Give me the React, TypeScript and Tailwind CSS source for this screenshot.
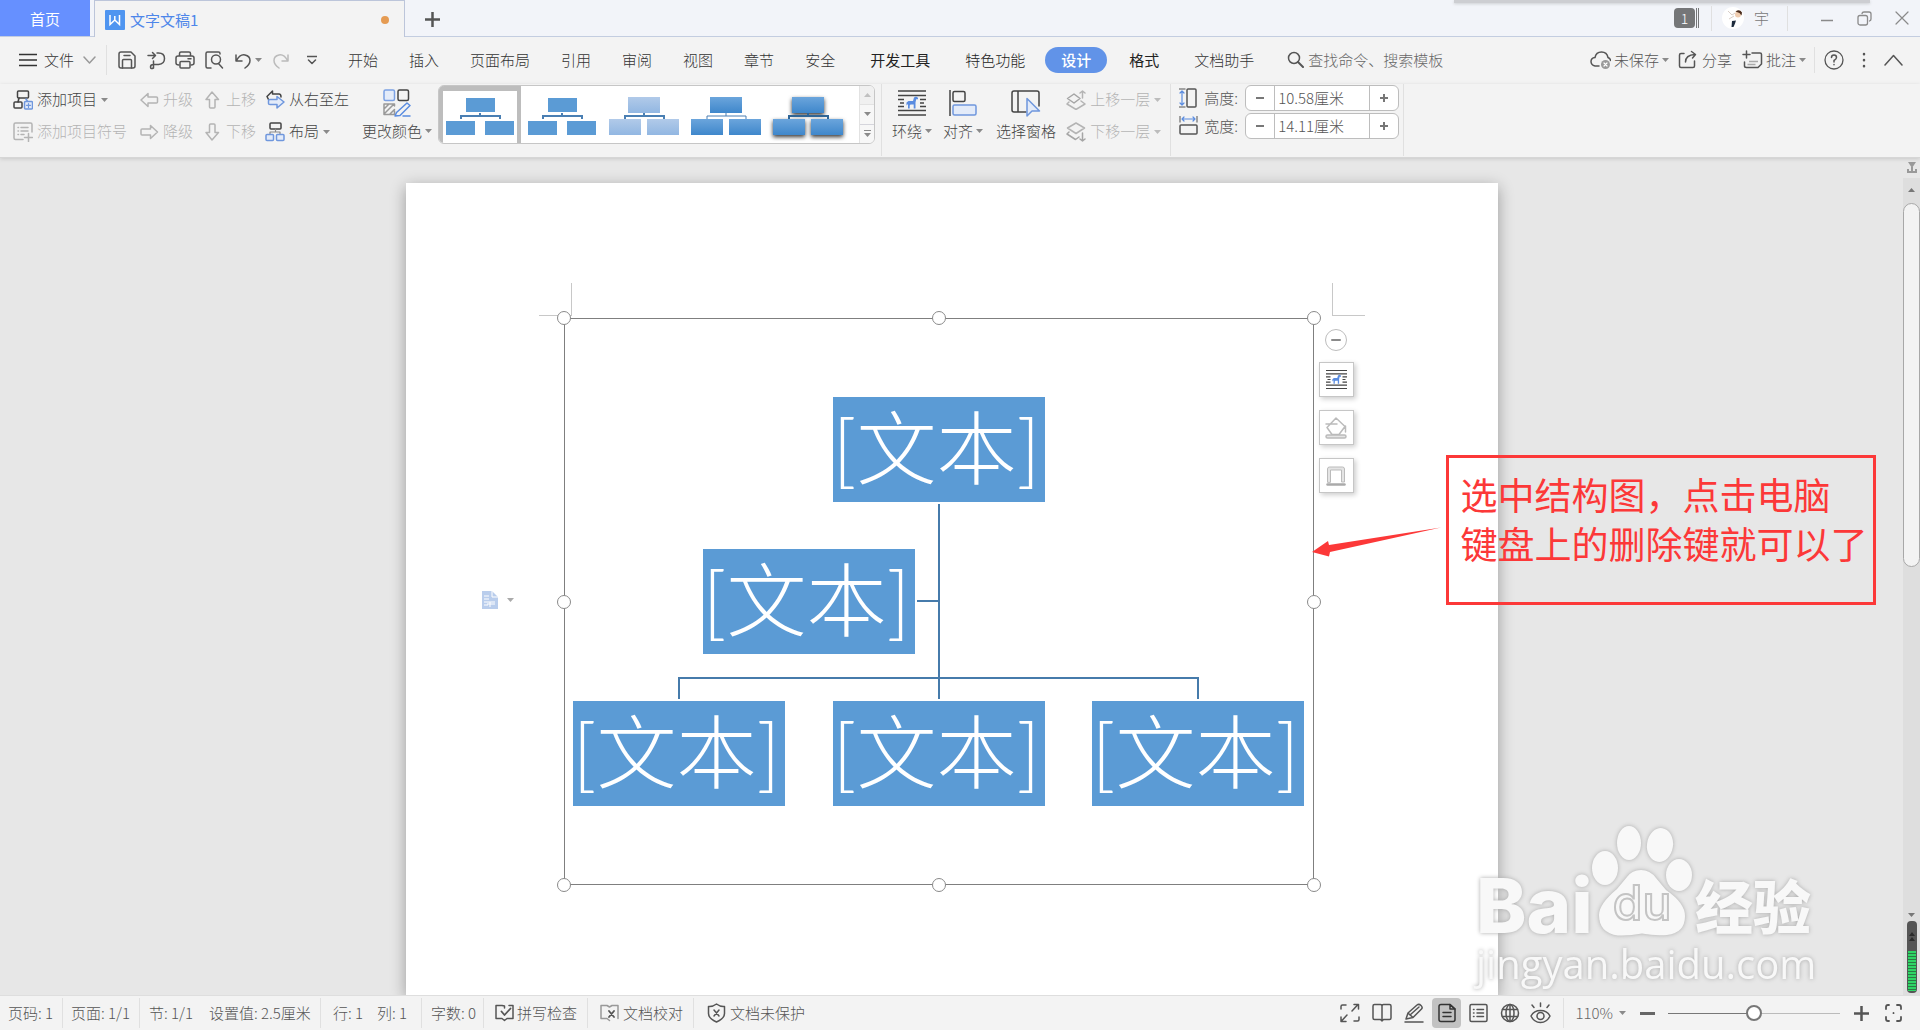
import { useState, type ReactNode } from "react";

type IconProps = {
  children: ReactNode;
  className?: string;
  width?: number;
  height?: number;
};

function Icon({ children, className, width = 20, height = 20 }: IconProps) {
  return (
    <svg
      width={width}
      height={height}
      viewBox={`0 0 ${width} ${height}`}
      fill="none"
      stroke="currentColor"
      strokeWidth="1.5"
      strokeLinecap="round"
      strokeLinejoin="round"
      className={`shrink-0 ${className ?? ""}`}
      aria-hidden="true"
    >
      {children}
    </svg>
  );
}

function Caret({ className = "text-[#8a8a8a]" }: { className?: string }) {
  return (
    <svg
      width="7"
      height="4"
      viewBox="0 0 7 4"
      className={`shrink-0 ${className}`}
      aria-hidden="true"
    >
      <path d="M0 0h7L3.5 4z" fill="currentColor" />
    </svg>
  );
}

function Divider({ className }: { className?: string }) {
  return <span className={`w-px shrink-0 bg-[#e0e0e0] ${className ?? ""}`} />;
}

function WrapIcon({ size }: { size: number }) {
  return (
    <svg
      width={size}
      height={size}
      viewBox="0 0 28 28"
      className="shrink-0 text-[#444]"
      aria-hidden="true"
    >
      <g stroke="currentColor" strokeWidth="1.6">
        <path d="M0 2h28M0 6.500h28M0 21.500h28M0 26h28" />
        <path d="M0 10.500h6M22 10.500h6M2 14h4M22 14h4M0 17.500h6M22 17.500h6" />
      </g>
      <path
        d="M10 19.500v-4.500l-1.500 1.500v-3l2-1.500h4.500l1-3.500 2-1 2 1.200v1.500h-1.800l-.7 3.300v6h-1.800V15.500h-3.200l-.8 1v3z"
        fill="#5a8ce0"
      />
    </svg>
  );
}

function TitleBar() {
  return (
    <header className="relative flex h-[37px] shrink-0 border-b border-[#c3cde0] bg-[#f2f4f9]">
      <button type="button" className="h-9 w-[90px] bg-[#6690ff] pt-0.5 font-normal text-white">
        首页
      </button>
      <div className="z-10 ml-1 flex h-[37px] w-[311px] items-center border-x border-t border-[#bcc5da] bg-[#f3f3f3] pt-0.5 pr-[15px] pl-[10px]">
        <svg width="20" height="20" viewBox="0 0 20 20" aria-hidden="true">
          <rect width="20" height="20" rx="1" fill="#4f95f0" />
          <path
            d="M5 5v9.500l4.800-4.500 4.700 4.500V5M9.800 6v4"
            fill="none"
            stroke="white"
            strokeWidth="1.500"
          />
        </svg>
        <span className="ml-[5px] font-normal text-[#4d86ea]">文字文稿1</span>
        <span className="ml-auto size-2 rounded-full bg-[#e59b52]" />
      </div>
      <button type="button" aria-label="新建" className="ml-5 text-[#555]">
        <Icon width={15} height={37}>
          <path d="M0 19.500h15M7.500 12v15" strokeWidth="2.500" strokeLinecap="butt" />
        </Icon>
      </button>
      <div className="absolute top-0 right-[50px] h-[3px] w-[416px] bg-[#cdced2] shadow-[0_1px_3px_#cdced2]" />
      <div className="ml-auto flex items-center pr-[11px] text-[#8a8a8a]">
        <span className="flex gap-px">
          <span className="flex h-5 w-[21px] items-center justify-center rounded-sm bg-[#757678] text-sm text-white">
            1
          </span>
          <span className="w-px bg-[#757678]" />
          <span className="w-px bg-[#757678]" />
        </span>
        <Divider className="ml-3 h-[25px] bg-[#cfd2d8]" />
        <svg width="22" height="22" viewBox="0 0 22 22" className="ml-2.5" aria-hidden="true">
          <circle cx="11" cy="11" r="11" fill="white" />
          <path d="M6 4l4 4 3-2M7 12l5-3" stroke="#d9cfc8" strokeWidth="1" fill="none" />
          <circle cx="16" cy="7.500" r="3" fill="#f0cdb0" />
          <path d="M13.500 4.500q4-3 6.500 1l-.500 3-2-2.500z" fill="#4a2c1c" />
          <path d="M10 14l4-.5-1 3-1.500 3.500h-2z" fill="#1d2b3c" />
        </svg>
        <span className="ml-2.5 text-[#777]">宇</span>
        <Divider className="ml-[18px] h-[25px] bg-[#cfd2d8]" />
        <button type="button" aria-label="最小化" className="ml-8">
          <Icon width={14} height={14}>
            <path d="M1 9.500h12" strokeLinecap="butt" />
          </Icon>
        </button>
        <button type="button" aria-label="还原" className="ml-[23px]">
          <Icon width={15} height={15}>
            <rect x="1" y="4.500" width="9.500" height="9.500" rx="2" strokeWidth="1.300" />
            <path d="M5 2.500q.3-1.500 2-1.500h5q2 0 2 2v5q0 1.500-1.500 2" strokeWidth="1.300" />
          </Icon>
        </button>
        <button type="button" aria-label="关闭" className="ml-[23px]">
          <Icon width={14} height={14}>
            <path d="M1 1l12 12M13 1L1 13" strokeWidth="1.200" />
          </Icon>
        </button>
      </div>
    </header>
  );
}

function QuickAccess() {
  return (
    <div className="flex items-center text-[#555]">
      <button type="button" className="flex items-center text-[#333]">
        <Icon width={18} height={14}>
          <path d="M0 1.500h18M0 7h18M0 12.500h18" strokeLinecap="butt" />
        </Icon>
        <span className="ml-[7px]">文件</span>
        <Icon width={13} height={8} className="ml-[9px] text-[#999]">
          <path d="M1 1l5.500 6L12 1" />
        </Icon>
      </button>
      <Divider className="ml-2.5 h-[30px] bg-[#c8c8c8]" />
      <div className="ml-2.5 flex gap-[9px]">
        <button type="button" aria-label="保存">
          <Icon>
            <path d="M4 2h10l4 4v10q0 2-2 2H4q-2 0-2-2V4q0-2 2-2z" />
            <path d="M5.500 18v-7.500q0-1 1-1h7q1 0 1 1V18M7 5.500h6" />
          </Icon>
        </button>
        <button type="button" aria-label="输出为PDF">
          <Icon>
            <path d="M7.500 11V18q-3 1.500-3-1t3-2.500h5q6-.500 6-6t-6-5.500H11" />
            <path d="M2 5.500h7M6.500 2.500l3 3-3 3" />
          </Icon>
        </button>
        <button type="button" aria-label="打印">
          <Icon>
            <path d="M4.500 6V3.500q0-1.500 1.500-1.500h8q1.500 0 1.500 1.500V6M4 15q-3 0-3-2V8q0-2 2-2h14q2 0 2 2v5q0 2-3 2" />
            <rect x="5" y="11.500" width="10" height="6.500" rx="1" />
            <path d="M13 8.700h3" />
          </Icon>
        </button>
        <button type="button" aria-label="打印预览">
          <Icon>
            <path d="M7 18H3.500Q2 18 2 16.500v-13Q2 2 3.500 2h11q1.500 0 1.500 1.500V4" />
            <circle cx="12" cy="9.500" r="4.500" />
            <path d="M14.500 13.500l4 4.500" />
          </Icon>
        </button>
      </div>
      <button type="button" aria-label="撤销" className="ml-[11px]">
        <Icon width={16} height={18}>
          <path d="M1 4v6h6M1.500 9.500Q5 3 10 4q5 1 5 5.500 0 4-5 7.500" />
        </Icon>
      </button>
      <Caret className="ml-1 text-[#888]" />
      <button type="button" aria-label="恢复" className="ml-[11px] text-[#bbb]">
        <Icon width={16} height={18}>
          <path d="M15 4v6H9M14.500 9.500Q11 3 6 4 1 5 1 9.500q0 4 5 7.500" />
        </Icon>
      </button>
      <button type="button" aria-label="自定义快速访问工具栏" className="ml-[18px]">
        <Icon width={10} height={10}>
          <path d="M0 1.500h10M1.500 5L5 8.500 8.500 5" />
        </Icon>
      </button>
    </div>
  );
}

const mainTabs = ["开始", "插入", "页面布局", "引用", "审阅", "视图", "章节", "安全"];

function MenuRow() {
  return (
    <nav className="flex h-[47px] shrink-0 items-center bg-[#f3f3f3] pr-[17px] pb-0.5 pl-[19px] text-[#333]">
      <QuickAccess />
      <div className="ml-[31px] flex gap-[31px]">
        {mainTabs.map((tab) => (
          <button type="button" key={tab}>
            {tab}
          </button>
        ))}
      </div>
      <div className="ml-[35px] flex items-center gap-[35px] text-[#222]">
        <button type="button" className="font-normal">
          开发工具
        </button>
        <button type="button">特色功能</button>
      </div>
      <button
        type="button"
        className="ml-5 h-[26px] rounded-full bg-[#6193e8] px-4 font-medium leading-[26px] text-white"
      >
        设计
      </button>
      <div className="ml-[22px] flex items-center gap-[35px]">
        <button type="button" className="font-normal text-[#222]">
          格式
        </button>
        <button type="button">文档助手</button>
      </div>
      <label className="ml-[33px] flex items-center gap-1 text-[#555]">
        <Icon width={17} height={17}>
          <circle cx="7" cy="7" r="5.500" />
          <path d="M11 11l5 5" strokeWidth="2" />
        </Icon>
        <input
          type="text"
          placeholder="查找命令、搜索模板"
          className="w-[140px] bg-transparent outline-none placeholder:text-[#666] placeholder:opacity-100"
        />
      </label>
      <div className="ml-auto flex items-center text-[#555]">
        <button type="button" className="flex items-center gap-[3px]">
          <Icon width={21} height={20}>
            <path d="M9 16H5Q1 15 1 11.500T5 7.500Q6 2 11.500 2T18 7.500q2.500 1 2.500 3" />
            <circle cx="15.500" cy="14.500" r="4.500" fill="#999" stroke="none" />
            <path d="M14 13l3 3M17 13l-3 3" stroke="white" strokeWidth="1.200" />
          </Icon>
          未保存
          <Caret />
        </button>
        <button type="button" className="ml-[9px] flex items-center gap-[5px]">
          <Icon width={19} height={20}>
            <path d="M6 3.500H3q-1.500 0-1.500 1.500v11q0 1.500 1.500 1.500h12q1.500 0 1.500-1.500v-5" />
            <path d="M7.500 12q0-7 9.500-7.500M13.500 1.500l4 3-3 3.500" />
          </Icon>
          分享
        </button>
        <button type="button" className="ml-2.5 flex items-center gap-[3px]">
          <Icon width={21} height={20}>
            <path d="M10 3h8q1.500 0 1.500 1.500V14l-3.500 3.500H4.500Q2.500 17.500 2.500 16v-4M4.500 1v7M1 4.500h7" />
            <path d="M7 11.500h9M5.500 14.500h8" stroke="#aaa" strokeLinecap="butt" />
          </Icon>
          批注
          <Caret />
        </button>
        <Divider className="ml-2 h-[26px]" />
        <button type="button" aria-label="帮助" className="ml-[9px]">
          <Icon>
            <circle cx="10" cy="10" r="9" strokeWidth="1.300" />
            <path d="M7.500 7.500q0-2.500 2.500-2.500t2.500 2.500Q12.500 9 10 10.500V12M10 14.500v.2" />
          </Icon>
        </button>
        <button type="button" aria-label="更多" className="ml-[18px]">
          <Icon width={4} height={18}>
            <path d="M2 3v.2M2 9v.2M2 15v.2" strokeWidth="2.500" />
          </Icon>
        </button>
        <button type="button" aria-label="折叠功能区" className="ml-[18px]">
          <Icon width={19} height={12}>
            <path d="M1 11l8.500-9.500L18 11" />
          </Icon>
        </button>
      </div>
    </nav>
  );
}

type ToolProps = {
  icon: ReactNode;
  label: string;
  caret?: boolean;
  muted?: boolean;
};

function Tool({ icon, label, caret, muted }: ToolProps) {
  return (
    <button
      type="button"
      className={`flex h-8 items-center gap-1 whitespace-nowrap ${muted ? "text-[#b4b4b4]" : "text-[#444]"}`}
    >
      {icon}
      <span className="pb-0.5">{label}</span>
      {caret ? <Caret className={muted ? "text-[#bcbcbc]" : undefined} /> : null}
    </button>
  );
}

function BigTool({ icon, label, caret }: ToolProps) {
  return (
    <button
      type="button"
      className="mt-1 flex flex-col items-center whitespace-nowrap text-[#444]"
    >
      <span className="flex h-[30px] items-center">{icon}</span>
      <span className="flex h-[26px] items-center gap-[3px]">
        {label}
        {caret ? <Caret /> : null}
      </span>
    </button>
  );
}

type ThumbProps = {
  fill: string;
  line: string;
  large?: boolean;
  thin?: boolean;
  shadow?: boolean;
};

function ChartThumb({ fill, line, large, thin, shadow }: ThumbProps) {
  const w = large ? 32 : 29;
  const h = large ? 16 : 14;
  return (
    <svg width="82" height="57" viewBox="0 0 82 57" className="block" aria-hidden="true">
      <g fill={fill} className={shadow ? "drop-shadow-[0_2px_2px_#000c]" : undefined}>
        <rect x={large ? 25 : 27} y={large ? 11 : 12} width={w} height={h} />
        <rect x={large ? 6 : 7} y={large ? 33 : 35} width={w} height={h} />
        <rect x={large ? 44 : 46} y={large ? 33 : 35} width={w} height={h} />
      </g>
      <path
        d="M41 27v3M22 33v-3h39v3"
        fill="none"
        stroke={line}
        strokeWidth={thin ? 1 : 2}
      />
    </svg>
  );
}

const thumbs: ThumbProps[] = [
  { fill: "#5b9bd5", line: "#4a7fb3" },
  { fill: "#5b9bd5", line: "#4a7fb3" },
  { fill: "url(#pale)", line: "#4a7fb3", large: true },
  { fill: "url(#deep)", line: "#4a7fb3", large: true, thin: true },
  { fill: "url(#deep)", line: "#2f6596", large: true, shadow: true },
];

function StyleGallery() {
  const [selected, setSelected] = useState(0);

  return (
    <div className="mt-px ml-1.5 flex h-[59px] overflow-hidden rounded-md border border-[#c6c6c6] bg-white">
      <svg width="0" height="0" className="absolute" aria-hidden="true">
        <linearGradient id="pale" x2="0" y2="1">
          <stop stopColor="#b1cae9" />
          <stop offset="1" stopColor="#92b7e2" />
        </linearGradient>
        <linearGradient id="deep" x2="0" y2="1">
          <stop stopColor="#6ba5dc" />
          <stop offset="1" stopColor="#3f87cb" />
        </linearGradient>
      </svg>
      {thumbs.map((thumb, index) => (
        <button
          type="button"
          key={index}
          aria-label={`样式 ${index + 1}`}
          onClick={() => setSelected(index)}
          className="relative"
        >
          <ChartThumb {...thumb} />
          {index === selected ? (
            <span className="absolute inset-0 border-x-4 border-t-[5px] border-[#bdbdbd]" />
          ) : null}
        </button>
      ))}
      <div className="ml-2.5 flex w-[15px] flex-col border-l border-[#e2e2e2] bg-[#f7f7f7]">
        <button
          type="button"
          aria-label="上一行"
          className="flex flex-1 items-center justify-center border-b border-[#e2e2e2] bg-[#f0f0f0]"
        >
          <Caret className="rotate-180 text-[#c0c0c0]" />
        </button>
        <button
          type="button"
          aria-label="下一行"
          className="flex flex-1 items-center justify-center border-b border-[#d5d5dc]"
        >
          <Caret />
        </button>
        <button
          type="button"
          aria-label="更多样式"
          className="flex flex-1 flex-col items-center justify-center gap-0.5"
        >
          <span className="h-px w-[7px] bg-[#8a8a8a]" />
          <Caret />
        </button>
      </div>
    </div>
  );
}

type SizeFieldProps = {
  id: string;
  label: string;
  initial: number;
  icon: ReactNode;
};

function SizeField({ id, label, initial, icon }: SizeFieldProps) {
  const [value, setValue] = useState(initial);

  return (
    <div className="flex items-center text-[#555]">
      {icon}
      <label htmlFor={id} className="ml-[5px] w-[39px]">
        {label}
      </label>
      <div className="ml-0.5 flex h-[26px] rounded-md border border-[#bdbdbd] bg-white">
        <button
          type="button"
          aria-label={`减小${label}`}
          onClick={() => setValue(value - 0.1)}
          className="flex w-7 items-center justify-center text-[#777]"
        >
          <span className="h-0.5 w-2 bg-current" />
        </button>
        <input
          id={id}
          type="text"
          readOnly
          value={`${value.toFixed(2)}厘米`}
          className="w-24 border-x border-[#bdbdbd] pl-[3px] outline-none"
        />
        <button
          type="button"
          aria-label={`增大${label}`}
          onClick={() => setValue(value + 0.1)}
          className="flex w-7 items-center justify-center text-[#777]"
        >
          <Icon width={8} height={8}>
            <path d="M0 4h8M4 0v8" strokeWidth="2" strokeLinecap="butt" />
          </Icon>
        </button>
      </div>
    </div>
  );
}

function Ribbon() {
  return (
    <section className="z-10 flex h-[74px] shrink-0 border-b border-[#d6d6d6] bg-[#f3f3f3] pl-[13px] shadow-[0_1px_4px_#0002]">
      <div>
        <Tool
          caret
          label="添加项目"
          icon={
            <Icon>
              <rect x="4.500" y="1" width="11" height="7" rx="1" />
              <rect x="1" y="12" width="8" height="6" rx="1" />
              <path d="M6 8l-1 4" />
              <g stroke="#6f97dd">
                <path d="M13 9l2 3" />
                <rect x="11.500" y="11.500" width="8" height="7.500" rx="1" fill="#e3ebf9" />
                <path d="M15.500 13.500v4M13.500 15.300h4" strokeWidth="1.200" />
              </g>
            </Icon>
          }
        />
        <Tool
          muted
          label="添加项目符号"
          icon={
            <Icon>
              <path d="M10 17.500H2.500Q1 17.500 1 16V2.500Q1 1 2.500 1h15Q19 1 19 2.500V10" />
              <path d="M5 5.500h.5M8 5.500h7M5 9h.5M8 9h7M5 12.500h.5M8 12.500h3M15.500 11.500v8M11.500 15.500h8" />
            </Icon>
          }
        />
      </div>
      <div className="ml-[13px]">
        <Tool
          muted
          label="升级"
          icon={
            <Icon width={19} height={16}>
              <path d="M1 8l7-6.500V5h8.500q1 0 1 1v4q0 1-1 1H8v3.500z" />
            </Icon>
          }
        />
        <Tool
          muted
          label="降级"
          icon={
            <Icon width={19} height={16}>
              <path d="M17.500 8l-7-6.500V5H2Q1 5 1 6v4q0 1 1 1h8.500v3.500z" />
            </Icon>
          }
        />
      </div>
      <div className="ml-3">
        <Tool
          muted
          label="上移"
          icon={
            <Icon width={17} height={18}>
              <path d="M7 1l6.500 7.500H10V16q0 1-1 1H5.500q-1 0-1-1V8.500H1z" />
            </Icon>
          }
        />
        <Tool
          muted
          label="下移"
          icon={
            <Icon width={17} height={18}>
              <path d="M7 17l6.500-7.500H10V2q0-1-1-1H5.500q-1 0-1 1v7.500H1z" />
            </Icon>
          }
        />
      </div>
      <div className="ml-[9px]">
        <Tool
          label="从右至左"
          icon={
            <Icon>
              <path d="M4 10.500L2 6.500 7.500 1v3H14q2 0 2 3" />
              <path
                d="M19 12l-7-5.500V9.500H5q-1.500 0-1.500 1v3q0 1 1.500 1h7V18z"
                stroke="#6f97dd"
                fill="#e3ebf9"
              />
            </Icon>
          }
        />
        <Tool
          caret
          label="布局"
          icon={
            <Icon>
              <rect x="5" y="1" width="11" height="6" rx="1" />
              <path d="M10.500 7v3M5 12v-2h10v2" strokeWidth="1.200" stroke="#888" />
              <rect x="1" y="12.500" width="7.500" height="6" rx="1" stroke="#6f97dd" fill="#e3ebf9" />
              <rect x="11.500" y="12.500" width="7.500" height="6" rx="1" stroke="#6f97dd" fill="#e3ebf9" />
            </Icon>
          }
        />
      </div>
      <div className="ml-[13px]">
        <BigTool
          caret
          label="更改颜色"
          icon={
            <Icon width={28} height={28}>
              <rect x="1" y="1" width="10.500" height="10.500" rx="1.500" stroke="#7ba1e4" fill="#e3ebf9" />
              <rect x="15" y="1" width="10.500" height="10.500" rx="1.500" />
              <path
                d="M11.500 17v-2H1v10.500h10.500V22M1 20l5-5M1 25l10-10M6.500 25.500l5-5"
                stroke="#999"
              />
              <path d="M13.500 23.500L24 14l3 2.500L17 26.500l-5 .5zM20 27h7" stroke="#5a8ce0" />
            </Icon>
          }
        />
      </div>
      <StyleGallery />
      <Divider className="ml-1.5 h-[72px]" />
      <div className="ml-2.5 flex">
        <BigTool caret label="环绕" icon={<WrapIcon size={28} />} />
        <div className="ml-[11px]">
          <BigTool
            caret
            label="对齐"
            icon={
              <Icon width={28} height={28}>
                <path d="M1 1v26" strokeLinecap="butt" />
                <rect x="4" y="2.500" width="12" height="10" rx="1.500" />
                <rect x="4" y="16" width="23" height="10" rx="1.500" stroke="#6f97dd" fill="#e3ebf9" />
              </Icon>
            }
          />
        </div>
        <div className="ml-[13px]">
          <BigTool
            label="选择窗格"
            icon={
              <Icon width={30} height={28}>
                <path d="M15 23H3q-2 0-2-2V4q0-2 2-2h23q2 0 2 2v13M7 2v21" />
                <path d="M16 9.500V27l5-5h7.500z" stroke="#6f97dd" fill="#e3ebf9" />
              </Icon>
            }
          />
        </div>
        <div className="ml-2.5">
          <Tool
            muted
            caret
            label="上移一层"
            icon={
              <Icon>
                <path d="M8 4l6 4.500L8 13 1.500 8.500z" stroke="#a5a5a5" />
                <path d="M3 12l-2 2 9 5.500 9-5.500-4-3M16.500 8V1M14 3l2.500-2L19 3" />
              </Icon>
            }
          />
          <Tool
            muted
            caret
            label="下移一层"
            icon={
              <Icon>
                <path d="M10 1l8.500 5L10 11.500 1.500 6z" />
                <path
                  d="M3 10l-2 2 8.500 5.500L13 15M16.500 11v8M14 17l2.500 2 2.500-2"
                  stroke="#a5a5a5"
                />
              </Icon>
            }
          />
        </div>
      </div>
      <Divider className="ml-[9px] h-[72px]" />
      <div className="mt-px ml-2 flex flex-col gap-0.5">
        <SizeField
          id="shape-height"
          label="高度:"
          initial={10.58}
          icon={
            <Icon>
              <rect x="8" y="1" width="9" height="18" rx="1" />
              <path d="M0 1h6M0 19h6" stroke="#888" />
              <path
                d="M3 3v14M1 5l2-2 2 2M1 15l2 2 2-2"
                stroke="#5a8ce0"
                strokeWidth="1.200"
              />
            </Icon>
          }
        />
        <SizeField
          id="shape-width"
          label="宽度:"
          initial={14.11}
          icon={
            <Icon>
              <rect x="1" y="9" width="17" height="9" rx="1" />
              <path d="M1 0v6M18 0v6" stroke="#888" />
              <path
                d="M3 3h13M5 1L3 3l2 2M14 1l2 2-2 2"
                stroke="#5a8ce0"
                strokeWidth="1.200"
              />
            </Icon>
          }
        />
      </div>
      <Divider className="ml-1 h-[72px]" />
    </section>
  );
}

const nodes = [
  "left-[269px] top-[79px]",
  "left-[139px] top-[231px]",
  "left-[9px] top-[383px]",
  "left-[269px] top-[383px]",
  "left-[528px] top-[383px]",
];

const handles = [
  "left-0 top-0",
  "left-1/2 top-0",
  "left-full top-0",
  "left-0 top-1/2",
  "left-full top-1/2",
  "left-0 top-full",
  "left-1/2 top-full",
  "left-full top-full",
];

function OrgChart() {
  return (
    <div className="absolute left-[158px] top-[135px] h-[567px] w-[750px]">
      <span className="absolute inset-0 border border-[#7f7f7f]" />
      <svg
        width="750"
        height="567"
        viewBox="0 0 750 567"
        className="absolute inset-0"
        aria-hidden="true"
      >
        <path
          d="M375 186v195M353 283h22M115 381v-21h519v21"
          fill="none"
          stroke="#467bab"
          strokeWidth="2"
        />
      </svg>
      {nodes.map((position) => (
        <div
          key={position}
          className={`absolute flex h-[105px] w-[212px] items-center justify-center whitespace-nowrap bg-[#5b9bd5] pr-1 pb-1.5 font-[Lato,'Noto_Sans_CJK_SC',sans-serif] text-[80px] leading-none text-white ${position}`}
        >
          <span>
            [<span className="font-light">文本</span>]
          </span>
        </div>
      ))}
      {handles.map((position) => (
        <span
          key={position}
          className={`absolute size-3.5 -translate-x-1/2 -translate-y-1/2 rounded-full border border-[#8a8a8a] bg-white ${position}`}
        />
      ))}
    </div>
  );
}

function FloatingTools() {
  const box =
    "flex size-[35px] items-center justify-center border border-[#c6c6c6] bg-white shadow-[2px_2px_5px_#0003]";
  return (
    <div className="absolute left-[913px] top-[146px] flex flex-col items-center gap-[13px]">
      <button
        type="button"
        aria-label="收起"
        className="-mb-0.5 flex size-[22px] items-center justify-center rounded-full border border-[#bdbdbd] bg-white"
      >
        <span className="h-0.5 w-2.5 rounded bg-[#8a8a8a]" />
      </button>
      <button type="button" aria-label="布局选项" className={box}>
        <WrapIcon size={21} />
      </button>
      <button type="button" aria-label="填充" className={`${box} text-[#bbb]`}>
        <Icon width={22} height={22}>
          <path d="M11 1l9 8.500L14 17.500H7L2 10.500zM1 7h11M20.500 9v6" />
          <rect x="1" y="18" width="20" height="3" rx="1.500" fill="#e4e4e4" />
        </Icon>
      </button>
      <button type="button" aria-label="轮廓" className={`${box} text-[#aaa]`}>
        <Icon>
          <path
            d="M1.500 16V3q0-2 2-2h13q2 0 2 2v13h-3V4h-11v12z"
            stroke="#bbb"
            fill="#e4e4e4"
            strokeWidth="1"
          />
          <path d="M1.500 18.500h17" strokeWidth="2.500" />
        </Icon>
      </button>
    </div>
  );
}

function Callout() {
  return (
    <>
      <svg
        width="130"
        height="30"
        viewBox="0 0 130 30"
        className="absolute left-[906px] top-[344px]"
        aria-hidden="true"
      >
        <path d="M0 25L16 14l1 4L129 .500 18 25l-1 4.500z" fill="#fc3838" />
      </svg>
      <div className="absolute left-[1040px] top-[272px] h-[150px] w-[430px] whitespace-nowrap border-[3px] border-[#fc3838] pt-3 pl-3 text-[37px] font-normal leading-[49px] text-[#fc3838]">
        选中结构图，点击电脑
        <br />
        键盘上的删除键就可以了
      </div>
    </>
  );
}

function Watermark() {
  return (
    <div className="absolute right-[100px] bottom-1 w-[344px] text-[#f8f8f8] drop-shadow-[0_0_2px_#aaa]">
      <div className="flex items-end whitespace-nowrap">
        <span className="w-[115px] font-[Inter,sans-serif] text-[76px] font-extrabold leading-[64px]">
          Bai
        </span>
        <div className="relative">
          <svg width="102" height="112" viewBox="0 0 102 112" fill="currentColor" aria-hidden="true">
            <ellipse cx="14" cy="43" rx="13" ry="17" />
            <ellipse cx="38" cy="18" rx="12" ry="17" />
            <ellipse cx="69" cy="20" rx="13" ry="17" transform="rotate(8 69 20)" />
            <ellipse cx="88" cy="50" rx="13" ry="16" />
            <path d="M50 45q9 0 15 8l10 12q19 13 19 26 0 17-18 19-12 1-25-1.500-13 2.500-24 2Q8 108 8 90q0-11 18-26l10-12q5-7 14-7z" />
          </svg>
          <span className="absolute inset-x-0 bottom-2.5 text-center font-[Inter,sans-serif] text-5xl font-medium leading-none text-[#f8f8f8] [-webkit-text-stroke:2px_#c4c4c4]">
            du
          </span>
        </div>
        <span className="ml-0.5 text-[58px] font-black leading-[66px]">经验</span>
      </div>
      <div className="font-['Open_Sans',sans-serif] text-[40px] font-medium leading-[54px]">
        jingyan.baidu.com
      </div>
    </div>
  );
}

function ScrollBar() {
  return (
    <div className="flex w-[17px] shrink-0 flex-col items-center">
      <svg width="12" height="12" viewBox="0 0 12 12" className="my-1 text-[#999]" aria-hidden="true">
        <path d="M2 0h8L6 6zM5 5h2v3H5zM1 7h2v2h2v-2h2v2h2V7h2v4H1z" fill="currentColor" />
      </svg>
      <div className="flex w-full flex-1 flex-col items-center bg-[#dedede] pt-2.5">
        <Caret className="rotate-180 text-[#777]" />
        <div className="mt-[11px] h-[364px] w-full rounded-full border border-[#a8a8a8] bg-[#f3f3f3]" />
        <Caret className="mt-auto text-[#777]" />
        <div className="mt-1 mb-0.5 flex h-[72px] w-2.5 flex-col items-center justify-end rounded-sm bg-[#555]">
          <svg width="6" height="9" viewBox="0 0 6 9" className="mb-2.5" aria-hidden="true">
            <path d="M3 0l3 4H0zM3 5l3 4H0z" fill="#2b2b2b" />
          </svg>
          <div className="mb-0.5 h-10 w-2 bg-[repeating-linear-gradient(#2fd566_0_2px,#2a7a45_2px_3px)]" />
        </div>
      </div>
    </div>
  );
}

function Workspace() {
  return (
    <main className="relative flex min-h-0 flex-1 overflow-hidden bg-[#e7e7e7]">
      <div className="flex flex-1 justify-center pt-[25px]">
        <div className="relative w-[1092px] bg-white shadow-[0_4px_15px_#0005]">
          <span className="absolute left-[133px] top-[100px] h-[33px] w-[33px] border-r border-b border-[#c8c8c8]" />
          <span className="absolute left-[926px] top-[100px] h-[33px] w-[33px] border-b border-l border-[#c8c8c8]" />
          <button
            type="button"
            aria-label="段落布局"
            className="absolute left-[76px] top-[408px] flex items-center gap-[9px]"
          >
            <svg width="16" height="18" viewBox="0 0 16 18" aria-hidden="true">
              <path d="M0 0h10l6 6v12H0z" fill="#b9cdec" />
              <path
                d="M10 0v6h6M2 5h5M2 8h5M2 11h11M2 14h4M5 13h8M8 11v5"
                fill="none"
                stroke="white"
                strokeWidth="1"
              />
            </svg>
            <Caret className="text-[#aaa]" />
          </button>
          <OrgChart />
          <FloatingTools />
          <Callout />
        </div>
      </div>
      <ScrollBar />
      <Watermark />
    </main>
  );
}

function StatusBar() {
  const [zoom, setZoom] = useState(50);

  return (
    <footer className="flex h-[35px] shrink-0 items-center whitespace-nowrap border-t border-[#dedede] bg-[#f3f3f3] pr-[18px] pl-2 text-[#555]">
      <span className="w-[46px]">页码: 1</span>
      <Divider className="ml-2 h-[30px]" />
      <span className="ml-2 w-[60px]">页面: 1/1</span>
      <Divider className="ml-2 h-[30px]" />
      <span className="ml-[9px] w-[46px]">节: 1/1</span>
      <span className="ml-3.5 w-[106px]">设置值: 2.5厘米</span>
      <Divider className="ml-[5px] h-[30px]" />
      <span className="ml-3 w-[30px]">行: 1</span>
      <span className="ml-3.5 w-[30px]">列: 1</span>
      <Divider className="ml-3.5 h-[30px]" />
      <span className="ml-[9px] w-[46px]">字数: 0</span>
      <Divider className="ml-1.5 h-[30px]" />
      <button type="button" className="ml-[11px] flex items-center gap-[3px]">
        <Icon width={19} height={18}>
          <path d="M7 1.500H1v13h6l2.500 2 2.500-2h6v-13h-4M9.500 4v-2L7 1.500" />
          <path d="M6.500 7.500l3 3.500 6-6.500" strokeWidth="1.800" />
        </Icon>
        拼写检查
      </button>
      <Divider className="ml-2.5 h-[30px]" />
      <button type="button" className="ml-3 flex items-center gap-1">
        <Icon width={19} height={18}>
          <path d="M7 1.500H1v13h6l2.500 2M18 14.500v-13h-6L9.500 3 7 1.500" stroke="#999" />
          <path d="M9 7l5 6M14 7l-5 6" strokeWidth="1.800" />
        </Icon>
        文档校对
      </button>
      <Divider className="ml-2.5 h-[30px]" />
      <button type="button" className="ml-[13px] flex items-center gap-1">
        <Icon width={19} height={20}>
          <path d="M9.500 1q4 3 8 2.500v7q0 5-8 8.500-8-3.500-8-8.500v-7q4 .5 8-2.500z" />
          <path d="M7 7l5 6M12 7l-5 6" />
        </Icon>
        文档未保护
      </button>

      <div className="ml-auto flex items-center">
        <button type="button" aria-label="全屏显示">
          <Icon>
            <path d="M1 6V3.500Q1 2 2.500 2H6M14 1.500h4.500V6M12 8l6-6.500M1 14v4.500h5M1.500 18L7 12M19 14v2.500q0 1.500-1.500 1.500H14" />
          </Icon>
        </button>
        <button type="button" aria-label="阅读版式" className="ml-3">
          <Icon>
            <path d="M10 3q0-1.500-1.500-1.500h-6Q1 1.500 1 3v12q0 1.500 1.500 1.500H8.500L10 18l1.500-1.500h6q1.500 0 1.500-1.500V3q0-1.500-1.500-1.500h-6Q10 1.500 10 3zv15" />
          </Icon>
        </button>
        <button type="button" aria-label="写作模式" className="ml-3">
          <Icon>
            <path d="M2 16l2-6 9-8q2-1.500 4 .500 2 2 .500 3.500L9 14.500zM4 10l5 4.500M6 12l9-8M1 19h18" />
          </Icon>
        </button>
        <button
          type="button"
          aria-label="页面视图"
          className="ml-2 flex h-[30px] w-[29px] items-center justify-center rounded bg-[#c2c2c2] text-[#333]"
        >
          <Icon width={18} height={20}>
            <path d="M12 1.500H3Q1 1.500 1 3.500v13q0 2 2 2h12q2 0 2-2V6z" />
            <path d="M12 1.500V6h5zM5 9.500h8M5 13.500h8" />
          </Icon>
        </button>
        <button type="button" aria-label="大纲" className="ml-2">
          <Icon width={19}>
            <rect x="1" y="1.500" width="17" height="17" rx="1.500" />
            <path d="M4.500 6.500h.5M8 6.500h6.500M4.500 10h.5M8 10h6.500M4.500 13.500h.5M8 13.500h6.500" />
          </Icon>
        </button>
        <button type="button" aria-label="Web版式" className="ml-3">
          <Icon>
            <circle cx="10" cy="10" r="8.500" />
            <ellipse cx="10" cy="10" rx="4" ry="8.500" />
            <path d="M10 1.500v17M2.500 6.500h15M2.500 13.500h15" />
          </Icon>
        </button>
        <button type="button" aria-label="护眼模式" className="ml-2.5">
          <Icon width={21} height={22}>
            <path d="M1 14q3-5.500 9.500-5.500T20 14q-3 6.500-9.500 6.500T1 14zM2 3l2 2.500M10.500 1v3.500M19 3l-2 2.500" />
            <circle cx="10.500" cy="14" r="3.500" />
          </Icon>
        </button>
        <Divider className="ml-3 h-[30px]" />
        <button type="button" className="ml-[11px] flex items-center gap-1.5 text-[#666]">
          110%
          <Caret />
        </button>
        <button type="button" aria-label="缩小" className="ml-3.5">
          <span className="block h-[3px] w-[15px] bg-[#666]" />
        </button>
        <input
          type="range"
          aria-label="显示比例"
          value={zoom}
          onChange={(event) => setZoom(Number(event.target.value))}
          className="ml-[13px] h-5 w-[172px] appearance-none bg-[linear-gradient(90deg,#777_50%,#bbb_50%)] bg-[length:100%_1px] bg-center bg-no-repeat [&::-webkit-slider-thumb]:size-4 [&::-webkit-slider-thumb]:appearance-none [&::-webkit-slider-thumb]:rounded-full [&::-webkit-slider-thumb]:border-2 [&::-webkit-slider-thumb]:border-[#777] [&::-webkit-slider-thumb]:bg-white"
        />
        <button type="button" aria-label="放大" className="ml-3.5">
          <Icon width={15} height={15}>
            <path d="M0 7.500h15M7.500 0v15" strokeWidth="2.500" strokeLinecap="butt" />
          </Icon>
        </button>
        <button type="button" aria-label="最佳显示比例" className="ml-4">
          <Icon width={17} height={18}>
            <path
              d="M1 5V3q0-2 2-2h1M12 1h2q2 0 2 2v2M16 13v2q0 2-2 2h-2M4 17H3q-2 0-2-2v-2M8.500 9v.2"
              strokeWidth="1.800"
            />
          </Icon>
        </button>
      </div>
    </footer>
  );
}

export default function App() {
  return (
    <div className="flex h-screen flex-col overflow-hidden font-['Noto_Sans_CJK_SC',sans-serif] text-[15px] font-light leading-6">
      <TitleBar />
      <MenuRow />
      <Ribbon />
      <Workspace />
      <StatusBar />
    </div>
  );
}
